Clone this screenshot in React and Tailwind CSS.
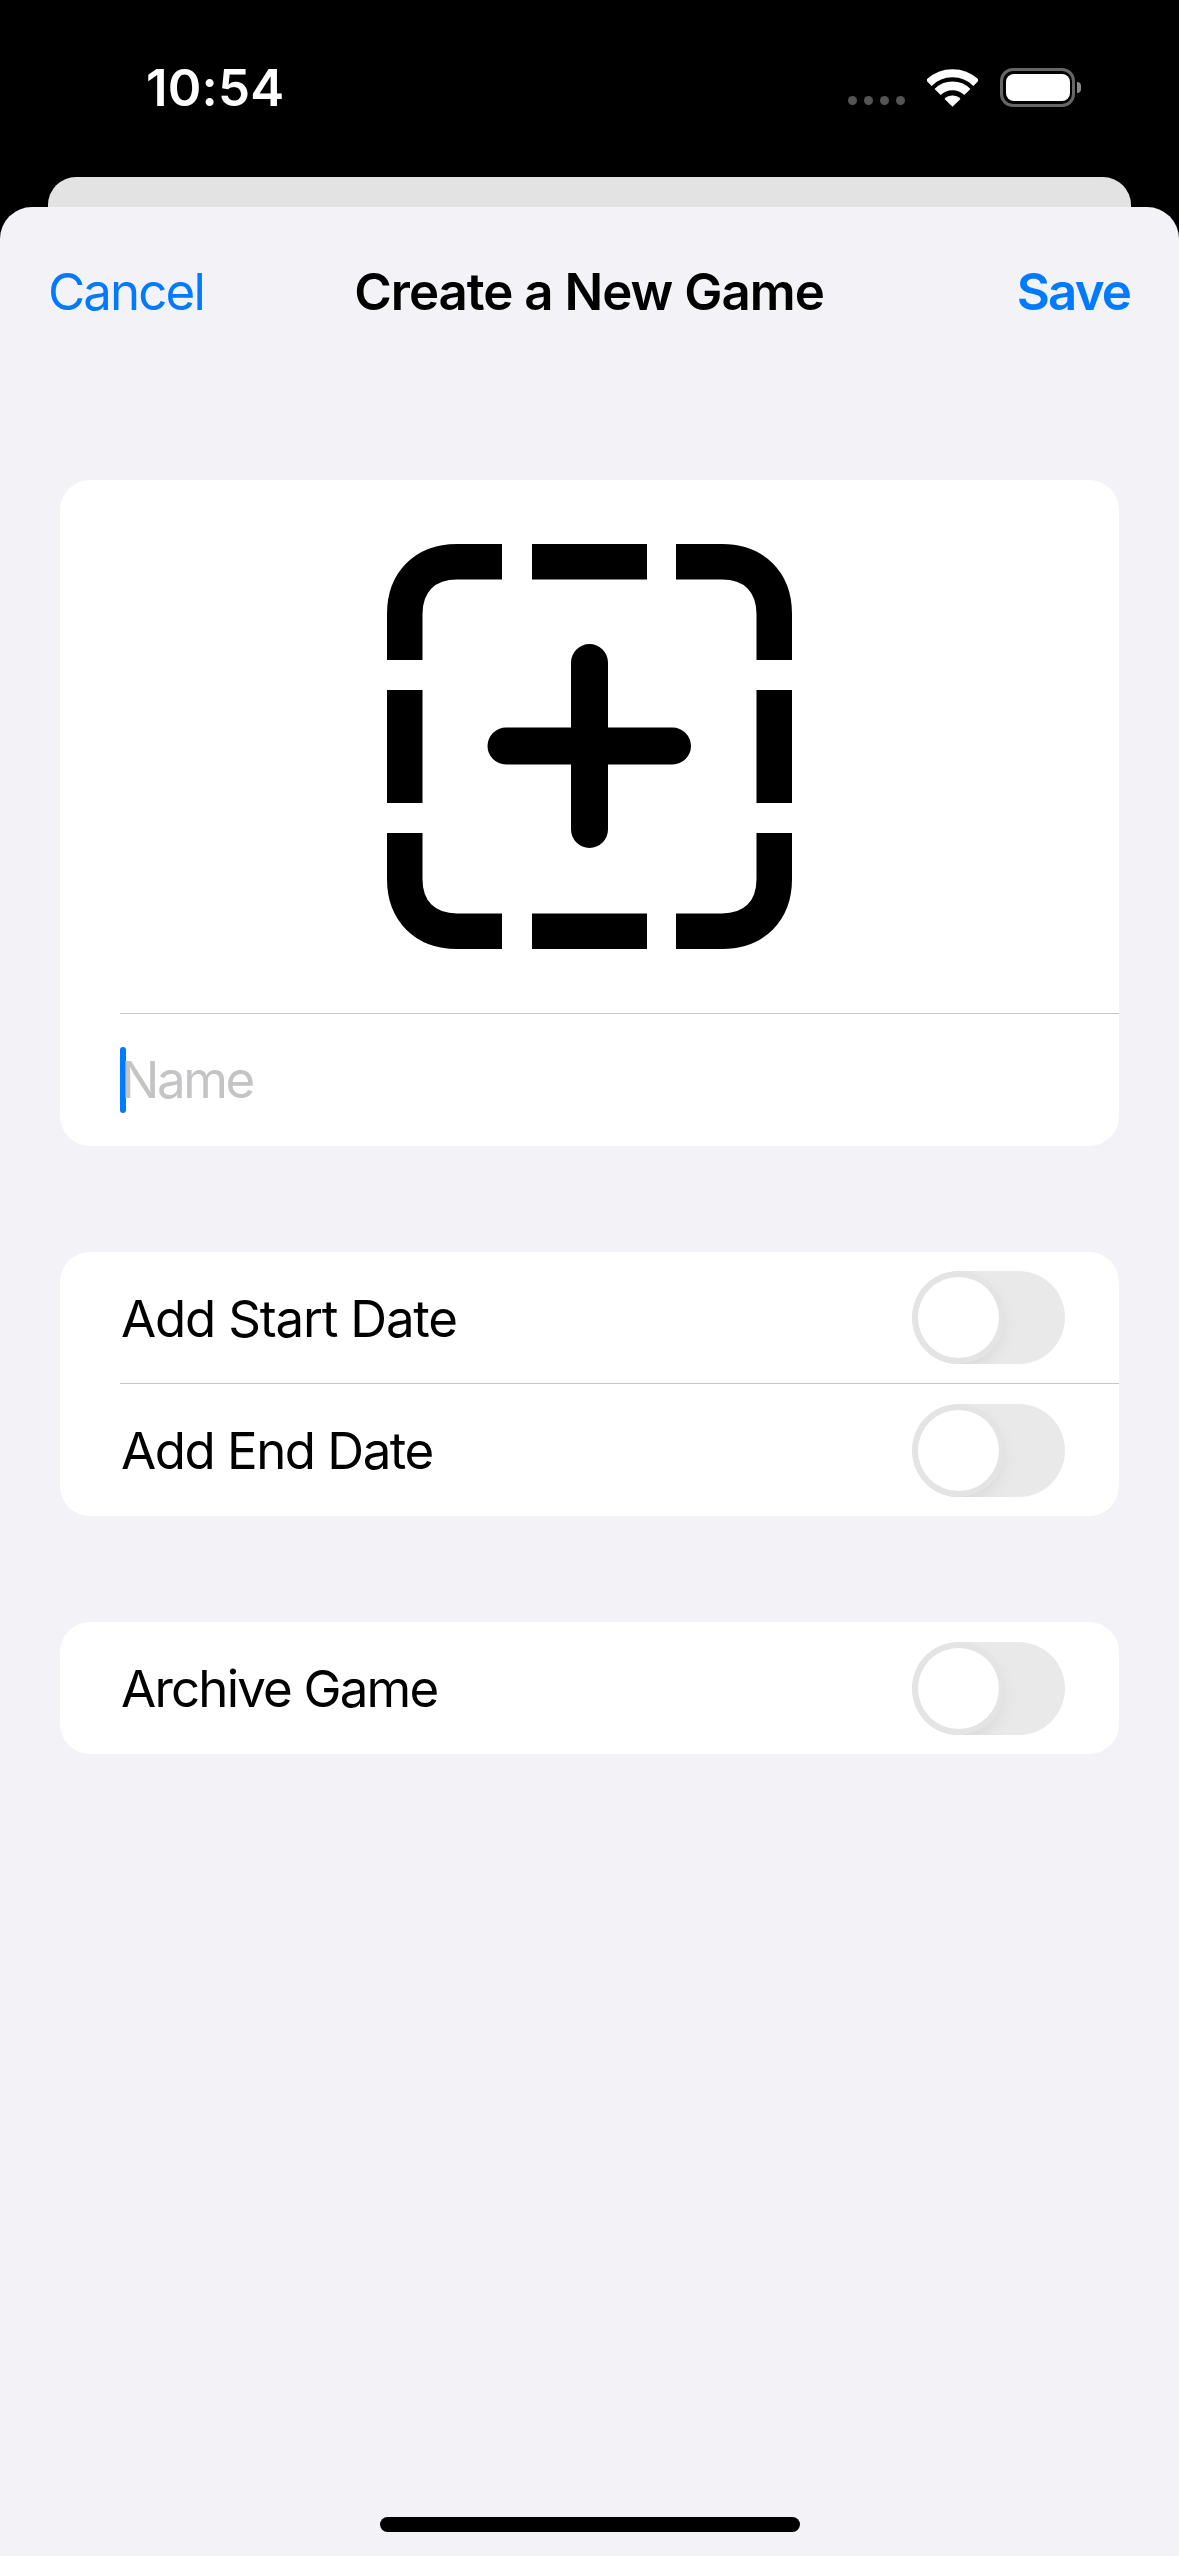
import React from "react";

function Toggle() {
  return (
    <div className="flex h-[93px] w-[153px] shrink-0 items-center overflow-hidden rounded-full bg-[#e9e9ea] pl-[6px]">
      <div className="h-[81px] w-[81px] rounded-full bg-white shadow-[0_0_0_6px_#e4e4e5,0_8px_20px_rgba(0,0,0,0.1),0_6px_2px_rgba(0,0,0,0.08)]" />
    </div>
  );
}

function Row({ label, className = "", labelClass = "" }) {
  return (
    <div className={`flex items-center justify-between pl-[61px] pr-[54px] ${className}`}>
      <span className={`pt-[2px] text-[51px] leading-[60px] text-black ${labelClass}`}>{label}</span>
      <Toggle />
    </div>
  );
}

function AddIcon() {
  const w = 35.5;
  return (
    <svg width="405" height="405" viewBox="0 0 405 405" fill="none" stroke="#000" strokeWidth={w}>
      <path d="M17.75 116V70C17.75 38 38 17.75 70 17.75H115" />
      <path d="M289 17.75H335C367 17.75 387.25 38 387.25 70V116" />
      <path d="M17.75 289V335C17.75 367 38 387.25 70 387.25H115" />
      <path d="M289 387.25H335C367 387.25 387.25 367 387.25 335V289" />
      <path d="M145 17.75H260M145 387.25H260M17.75 146V259M387.25 146V259" />
      <path d="M202.5 118.5V285.5M119 202H285.5" strokeWidth="37" strokeLinecap="round" />
    </svg>
  );
}

function Wifi() {
  return (
    <svg width="51" height="38" viewBox="0 0 50 37" fill="none" stroke="#fff">
      <path d="M1.7 13.7A33 33 0 0 1 48.3 13.7" strokeWidth="8" />
      <path d="M10.4 22.4A20.7 20.7 0 0 1 39.6 22.4" strokeWidth="8.5" />
      <path d="M25 37L17.2 29.2A11 11 0 0 1 32.8 29.2Z" fill="#fff" stroke="none" />
    </svg>
  );
}

function Battery() {
  return (
    <div className="flex items-center gap-[2px]">
      <div className="flex h-[39px] w-[75px] items-center justify-center rounded-[13px] border-[3px] border-[#666666]">
        <div className="h-[27px] w-[64px] rounded-[8px] bg-white" />
      </div>
      <div className="h-[11px] w-[4px] rounded-r-full bg-[#8a8a8a]" />
    </div>
  );
}

export default function App() {
  return (
    <div className="flex h-[2556px] w-[1179px] flex-col overflow-hidden bg-black font-['Inter',sans-serif]">
      <div className="flex h-[177px] shrink-0 items-start justify-between pl-[146px] pr-[98px] pt-[60px]">
        <span className="text-[51px] font-semibold leading-[56px] tracking-[0.2px] text-white">10:54</span>
        <div className="flex items-center pt-[8px]">
          <div className="mr-[22px] mt-[26px] flex gap-[7px]">
            <span className="h-[9px] w-[9px] rounded-full bg-[#555555]" />
            <span className="h-[9px] w-[9px] rounded-full bg-[#555555]" />
            <span className="h-[9px] w-[9px] rounded-full bg-[#555555]" />
            <span className="h-[9px] w-[9px] rounded-full bg-[#555555]" />
          </div>
          <div className="mr-[22px] flex"><Wifi /></div>
          <Battery />
        </div>
      </div>
      <div className="mx-[48px] h-[30px] shrink-0 rounded-t-[28px] bg-[#e3e3e3]" />
      <div className="flex flex-1 flex-col rounded-t-[32px] bg-[#f2f2f7]">
        <div className="grid h-[170px] shrink-0 grid-cols-[1fr_auto_1fr] items-center pl-[48px] pr-[49px]">
          <span className="text-[51px] tracking-[-1.9px] text-[#007aff]">Cancel</span>
          <span className="text-[51px] font-semibold tracking-[-1px] text-black">Create a New Game</span>
          <span className="justify-self-end text-[51px] font-semibold tracking-[-1.9px] text-[#007aff]">Save</span>
        </div>

        <div className="mx-[60px] mt-[103px] rounded-[30px] bg-white">
          <div className="flex h-[533px] justify-center pt-[64px]">
            <AddIcon />
          </div>
          <div className="ml-[60px] h-px bg-[#c6c6c8]" />
          <div className="flex h-[132px] items-center pl-[60px]">
            <div className="mt-[-1px] h-[66px] w-[6px] shrink-0 rounded-full bg-[#007aff]" />
            <span className="ml-[-5px] text-[51px] tracking-[-2.4px] text-[#c4c4c6]">Name</span>
          </div>
        </div>

        <div className="mx-[60px] mt-[106px] rounded-[30px] bg-white">
          <Row label="Add Start Date" className="h-[131px]" labelClass="tracking-[-1.2px]" />
          <div className="ml-[60px] h-px bg-[#c6c6c8]" />
          <Row label="Add End Date" className="h-[132px]" labelClass="tracking-[-1.5px]" />
        </div>

        <div className="mx-[60px] mt-[106px] rounded-[30px] bg-white">
          <Row label="Archive Game" className="h-[132px]" labelClass="tracking-[-1.8px]" />
        </div>

        <div className="mb-[24px] mt-auto h-[15px] w-[420px] self-center rounded-full bg-black" />
      </div>
    </div>
  );
}
